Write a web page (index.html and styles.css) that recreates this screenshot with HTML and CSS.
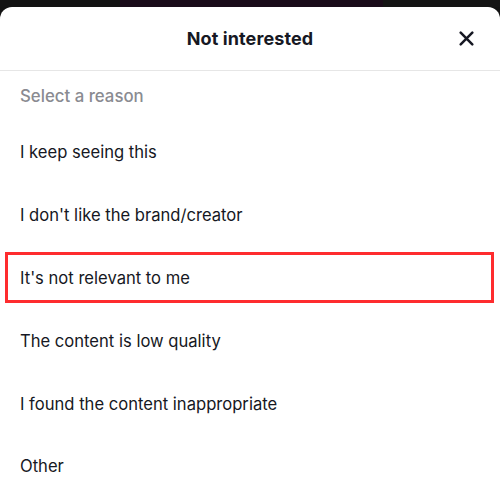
FILE: index.html
```html
<!DOCTYPE html>
<html>
<head>
<meta charset="utf-8">
<link rel="stylesheet" href="styles.css">
</head>
<body>
<div class="backdrop">
  <div class="bd-left"></div>
  <div class="bd-mid"></div>
  <div class="bd-right"></div>
</div>
<div class="sheet">
  <div class="header">
    <div class="title">Not interested</div>
    <svg class="close" width="15" height="15" viewBox="0 0 15 15"><path d="M1.7 1.7 L13.3 13.3 M13.3 1.7 L1.7 13.3" stroke="#161823" stroke-width="2.5" stroke-linecap="round"/></svg>
  </div>
  <div class="subhead">Select a reason</div>
  <div class="list">
    <div class="row">I keep seeing this</div>
    <div class="row">I don't like the brand/creator</div>
    <div class="row highlighted">It's not relevant to me<span class="mark"></span></div>
    <div class="row">The content is low quality</div>
    <div class="row">I found the content inappropriate</div>
    <div class="row">Other</div>
  </div>
</div>
</body>
</html>
```
FILE: styles.css
```css
html, body {
  margin: 0;
  padding: 0;
  background: #121212;
  height: 498px;
  overflow: hidden;
}
.backdrop {
  display: flex;
  height: 7px;
}
.bd-left { width: 120px; background: #131313; }
.bd-mid { width: 263px; background: #1a0b19; }
.bd-right { flex: 1; background: #141414; }
.sheet {
  background: #fff;
  border-radius: 12px 12px 0 0;
  height: 491px;
  font-family: "Inter", "Liberation Sans", sans-serif;
  color: #161823;
}
.header {
  height: 63px;
  border-bottom: 1px solid #e6e6e6;
  display: flex;
  align-items: center;
  justify-content: center;
  position: relative;
}
.title {
  font-size: 18px;
  font-weight: 700;
  letter-spacing: 0.1px;
}
.close {
  position: absolute;
  right: 26px;
  top: 24px;
}
.subhead {
  height: 50px;
  padding-left: 20px;
  display: flex;
  align-items: center;
  font-size: 16.8px;
  font-weight: 500;
  color: #8a8b91;
}
.list {
  display: flex;
  flex-direction: column;
}
.row {
  height: 62.8px;
  padding-left: 20px;
  display: flex;
  align-items: center;
  font-size: 16.6px;
  position: relative;
}
.mark {
  position: absolute;
  left: 5px;
  right: 6px;
  top: 5px;
  bottom: 6px;
  border: 3.5px solid #fe2c2e;
}
```
